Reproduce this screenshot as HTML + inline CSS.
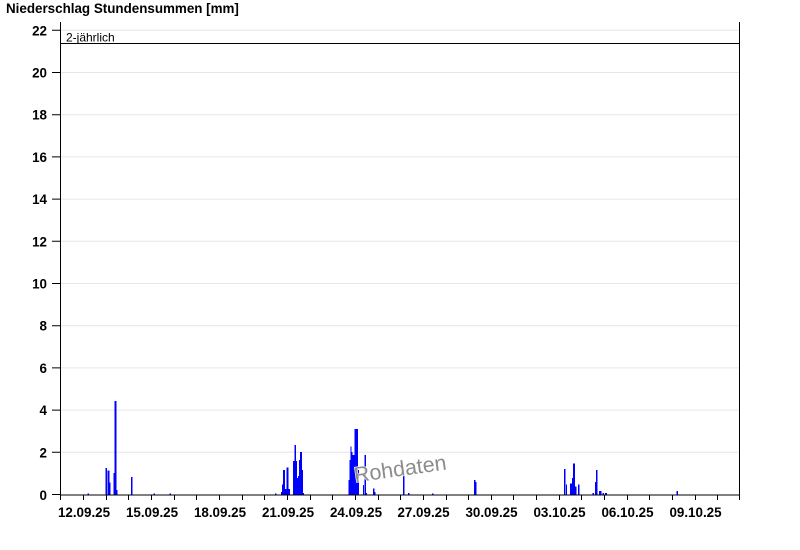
<!DOCTYPE html>
<html><head><meta charset="utf-8"><style>
html,body{margin:0;padding:0;background:#fff;}
svg{display:block;font-family:"Liberation Sans",Arial,sans-serif;}
</style></head><body>
<svg width="800" height="550" viewBox="0 0 800 550" xmlns="http://www.w3.org/2000/svg">
<text x="6" y="13" font-size="13.4" font-weight="bold" fill="#000">Niederschlag Stundensummen [mm]</text>
<path d="M61 452.3H739M61 410.1H739M61 367.9H739M61 325.7H739M61 283.5H739M61 241.3H739M61 199.1H739M61 156.9H739M61 114.7H739M61 72.5H739M61 30.3H739" stroke="#e6e6e6" stroke-width="1"/>
<g font-size="13.4" font-weight="bold" text-anchor="end" fill="#000">
<text x="47" y="500">0</text><text x="47" y="457.5">2</text><text x="47" y="415">4</text>
<text x="47" y="373">6</text><text x="47" y="330.5">8</text><text x="47" y="288.5">10</text>
<text x="47" y="246.5">12</text><text x="47" y="204">14</text><text x="47" y="162">16</text>
<text x="47" y="119.5">18</text><text x="47" y="77.5">20</text><text x="47" y="35.5">22</text>
</g>
<path d="M52 494.5H61M52 452.3H61M52 410.1H61M52 367.9H61M52 325.7H61M52 283.5H61M52 241.3H61M52 199.1H61M52 156.9H61M52 114.7H61M52 72.5H61M52 30.3H61" stroke="#000" stroke-width="1"/>
<g fill="#0000ff">
<rect x="87.5" y="493.5" width="1.5" height="1.5"/>
<rect x="105.5" y="468" width="1.5" height="27"/>
<rect x="107.5" y="470.5" width="2" height="24.5"/>
<rect x="109.5" y="482.5" width="1" height="12.5"/>
<rect x="113.5" y="473" width="1" height="22"/>
<rect x="114.5" y="401" width="2" height="94"/>
<rect x="116.5" y="490" width="1" height="5"/>
<rect x="131" y="477" width="1.5" height="18"/>
<rect x="153.5" y="493.5" width="1.5" height="1.5"/>
<rect x="169.5" y="493.5" width="1.5" height="1.5"/>
<rect x="275" y="493.5" width="1.5" height="1.5"/>
<rect x="281" y="492" width="1" height="3"/>
<rect x="282" y="484.5" width="1" height="10.5"/>
<rect x="283" y="470" width="2" height="25"/>
<rect x="285" y="489" width="1.5" height="6"/>
<rect x="286.5" y="467.5" width="2" height="27.5"/>
<rect x="288.5" y="489" width="1.5" height="6"/>
<rect x="293" y="461" width="1.5" height="34"/>
<rect x="294.5" y="445" width="1.5" height="50"/>
<rect x="296" y="461" width="1" height="34"/>
<rect x="297" y="478" width="1" height="17"/>
<rect x="298" y="476" width="1" height="19"/>
<rect x="299" y="460" width="1" height="35"/>
<rect x="300" y="452" width="2" height="43"/>
<rect x="302" y="470" width="1" height="25"/>
<rect x="303" y="493" width="1" height="2"/>
<rect x="348.5" y="480" width="1.5" height="15"/>
<rect x="349.5" y="460" width="1" height="35"/>
<rect x="350.5" y="446.5" width="1" height="48.5"/>
<rect x="351.5" y="452" width="1" height="43"/>
<rect x="352.5" y="455" width="2" height="40"/>
<rect x="354.5" y="429" width="1" height="66"/>
<rect x="355.5" y="429" width="2.5" height="66"/>
<rect x="358" y="470" width="1" height="25"/>
<rect x="363" y="485" width="1" height="10"/>
<rect x="364.5" y="455" width="1.5" height="40"/>
<rect x="366" y="493" width="1" height="2"/>
<rect x="373" y="488.5" width="1.5" height="6.5"/>
<rect x="374.5" y="492" width="1" height="3"/>
<rect x="403" y="470.5" width="1.5" height="24.5"/>
<rect x="408" y="493" width="1.5" height="2"/>
<rect x="432" y="493.5" width="1.5" height="1.5"/>
<rect x="474" y="480" width="1.5" height="15"/>
<rect x="475.5" y="482" width="1" height="13"/>
<rect x="564" y="469" width="1.5" height="26"/>
<rect x="566" y="484.5" width="1" height="10.5"/>
<rect x="570" y="483.5" width="2" height="11.5"/>
<rect x="572" y="478" width="1" height="17"/>
<rect x="573" y="463.5" width="2" height="31.5"/>
<rect x="575" y="486.5" width="1.5" height="8.5"/>
<rect x="578" y="484.5" width="1.5" height="10.5"/>
<rect x="592.5" y="493" width="1.5" height="2"/>
<rect x="595" y="482" width="1" height="13"/>
<rect x="596" y="470" width="1.5" height="25"/>
<rect x="599" y="491" width="2.5" height="4"/>
<rect x="602.5" y="493" width="1.5" height="2"/>
<rect x="605" y="493" width="2" height="2"/>
<rect x="676.5" y="491" width="1.5" height="4"/>
</g>
<line x1="61" y1="43.5" x2="739" y2="43.5" stroke="#000" stroke-width="1"/>
<text x="66" y="41.5" font-size="12" fill="#000">2-jährlich</text>
<path d="M60.5 22V495M739.5 22V495M60 495H740" stroke="#000" stroke-width="1" fill="none"/>
<path d="M60.5 495v5M83.5 495v5M106.5 495v5M128.5 495v5M151.5 495v5M174.5 495v5M196.5 495v5M219.5 495v5M242.5 495v5M264.5 495v5M287.5 495v5M310.5 495v5M332.5 495v5M355.5 495v5M378.5 495v5M400.5 495v5M423.5 495v5M446.5 495v5M468.5 495v5M491.5 495v5M513.5 495v5M536.5 495v5M559.5 495v5M581.5 495v5M604.5 495v5M627.5 495v5M649.5 495v5M672.5 495v5M695.5 495v5M717.5 495v5M739.5 495v5" stroke="#000" stroke-width="1"/>
<g font-size="13.4" font-weight="bold" text-anchor="middle" fill="#000">
<text x="84" y="517">12.09.25</text><text x="152" y="517">15.09.25</text>
<text x="220" y="517">18.09.25</text><text x="288" y="517">21.09.25</text>
<text x="356" y="517">24.09.25</text><text x="423.5" y="517">27.09.25</text>
<text x="491.5" y="517">30.09.25</text><text x="559.5" y="517">03.10.25</text>
<text x="627.5" y="517">06.10.25</text><text x="695.5" y="517">09.10.25</text>
</g>
<text x="400" y="476" font-size="21.5" fill="#8c8c8c" stroke="#fff" stroke-width="1.2" paint-order="stroke" text-anchor="middle" transform="rotate(-8 400 468)">Rohdaten</text>
</svg>
</body></html>
